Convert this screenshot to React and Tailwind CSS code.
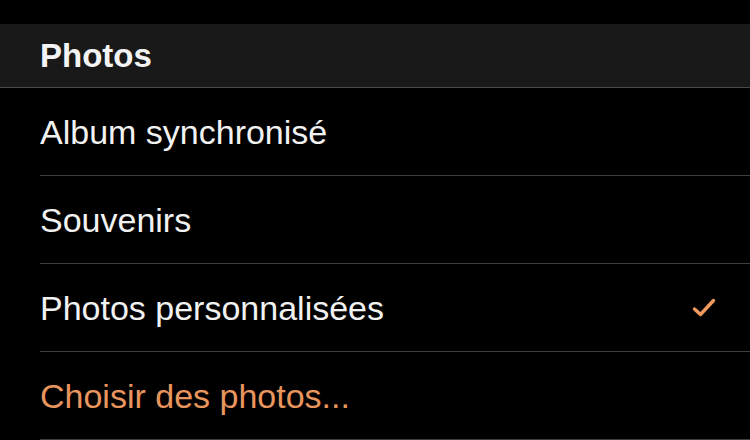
import React from "react";

const rows = [
  { label: "Album synchronisé" },
  { label: "Souvenirs" },
  { label: "Photos personnalisées", checked: true },
  { label: "Choisir des photos...", accent: true },
];

export default function App() {
  return (
    <div
      className="w-[750px] h-[440px] overflow-hidden bg-black"
      style={{ fontFamily: '"Liberation Sans", Arial, sans-serif' }}
    >
      <div className="h-6 bg-black" />
      <div className="h-[64px] bg-[#191919] border-b border-[#4a4a4a] flex items-center pl-10">
        <span className="text-[33px] font-bold text-[#f4f4f4] leading-none">Photos</span>
      </div>
      {rows.map((r) => (
        <div key={r.label} className="pl-10">
          <div className="h-[88px] border-b border-[#3f3f3f] flex items-center justify-between pr-[34px]">
            <span
              className={
                "text-[34px] leading-none " +
                (r.accent ? "text-[#e8955e]" : "text-[#f2f2f2]")
              }
            >
              {r.label}
            </span>
            {r.checked && (
              <svg width="24" height="20" viewBox="0 0 24 20">
                <path
                  d="M2.5 11 L8.5 16.5 L21.5 2.5"
                  fill="none"
                  stroke="#f09a5e"
                  strokeWidth="3.4"
                  strokeLinecap="round"
                  strokeLinejoin="round"
                />
              </svg>
            )}
          </div>
        </div>
      ))}
    </div>
  );
}
